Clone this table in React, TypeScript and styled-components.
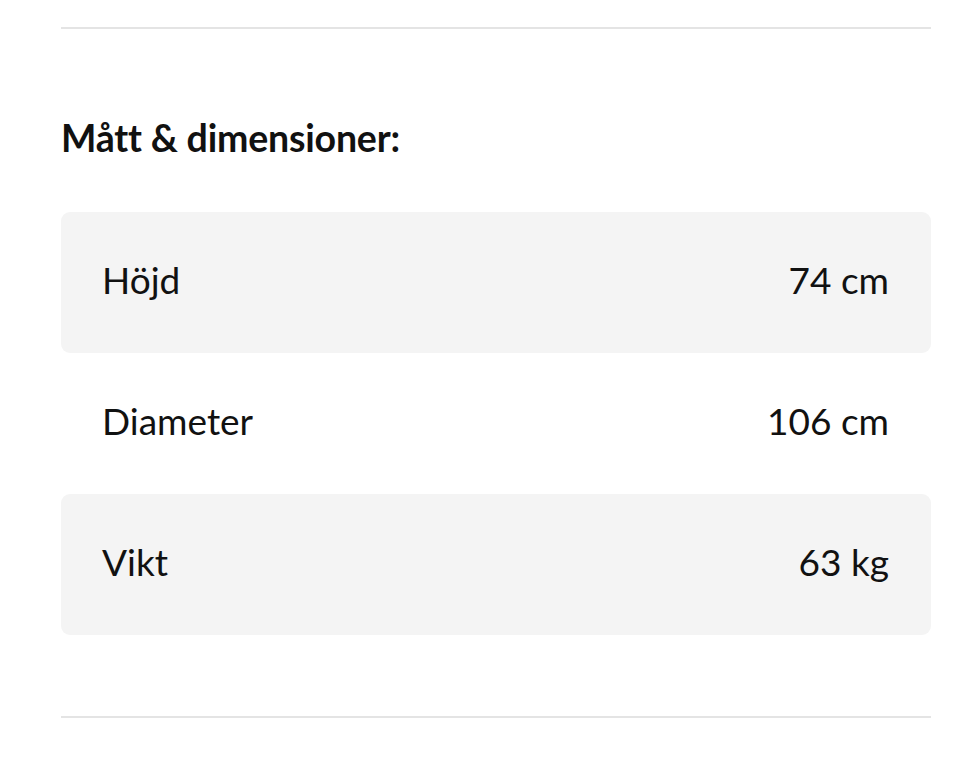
import styled, { createGlobalStyle } from 'styled-components';

const GlobalStyle = createGlobalStyle`
  html, body {
    margin: 0;
    padding: 0;
    background: #ffffff;
  }
  body {
    font-family: Lato, 'Noto Sans', sans-serif;
    color: #111111;
  }
`;

const specs = [
  { label: 'Höjd', value: '74 cm' },
  { label: 'Diameter', value: '106 cm' },
  { label: 'Vikt', value: '63 kg' },
];

export default function App() {
  return (
    <>
      <GlobalStyle />
      <Section>
        <Divider />
        <Heading>Mått &amp; dimensioner:</Heading>
        <SpecList>
          {specs.map((spec, i) => (
            <SpecRow key={spec.label} $striped={i % 2 === 0}>
              <SpecLabel>{spec.label}</SpecLabel>
              <SpecValue>{spec.value}</SpecValue>
            </SpecRow>
          ))}
        </SpecList>
        <Divider />
      </Section>
    </>
  );
}

const Section = styled.section`
  margin: 0 29px 0 61px;
  padding-top: 27px;
  display: flex;
  flex-direction: column;
`;

const Divider = styled.hr`
  margin: 0;
  border: none;
  height: 2px;
  background: #e4e4e4;
`;

const Heading = styled.h2`
  margin: 87px 0 0;
  font-size: 37.5px;
  line-height: 44px;
  font-weight: 700;
  letter-spacing: -0.2px;
`;

const SpecList = styled.div`
  margin: 52px 0 81px;
  display: flex;
  flex-direction: column;
`;

const SpecRow = styled.div<{ $striped: boolean }>`
  display: flex;
  align-items: center;
  justify-content: space-between;
  height: 141px;
  padding: 0 42px 6px 41px;
  box-sizing: border-box;
  border-radius: 9px;
  background: ${props => (props.$striped ? '#f4f4f4' : 'transparent')};
  font-size: 37px;
`;

const SpecLabel = styled.span`
  font-weight: 400;
`;

const SpecValue = styled.span`
  font-weight: 400;
`;
